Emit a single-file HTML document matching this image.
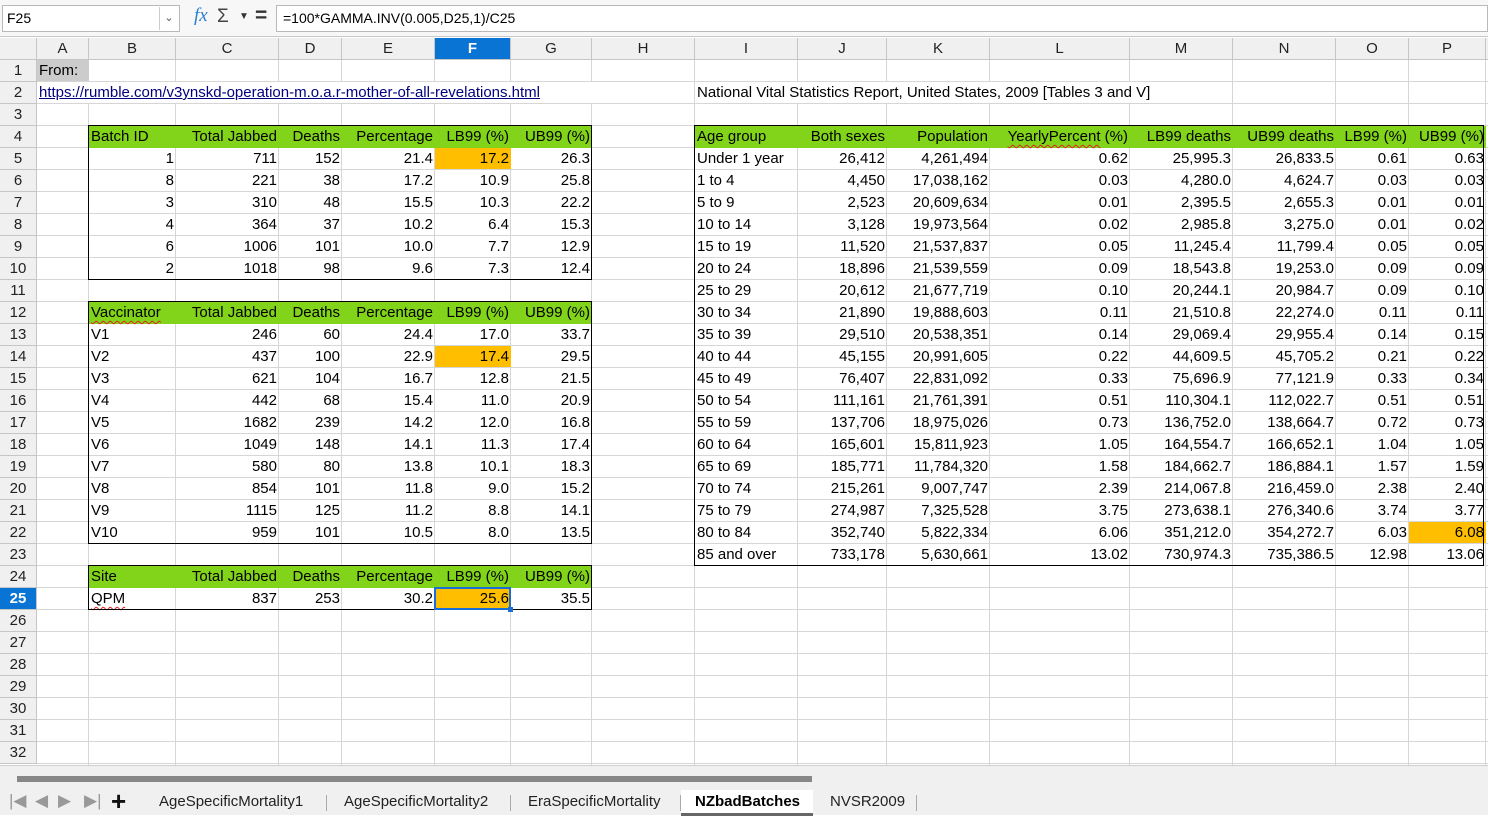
<!DOCTYPE html>
<html><head><meta charset="utf-8"><style>
*{margin:0;padding:0;box-sizing:border-box}
body{width:1488px;height:815px;overflow:hidden;background:#fff;font-family:"Liberation Sans",sans-serif;position:relative}
#top{position:absolute;left:0;top:0;width:1488px;height:37px;background:#f7f7f7;border-bottom:1px solid #c8c8c8}
#nb{position:absolute;left:2px;top:5px;width:178px;height:27px;background:#fff;border:1px solid #b9b9b9;font-size:14px;line-height:25px;padding-left:4px}
#nbd{position:absolute;left:159px;top:7px;width:19px;height:23px;border-left:1px solid #ccc;font-size:11px;color:#555;text-align:center;line-height:23px}
#fx{position:absolute;left:194px;top:5px;font:italic 19px "Liberation Serif",serif;color:#2a7fd0}
#sig{position:absolute;left:217px;top:6px;font-size:19px;color:#444}
#dd{position:absolute;left:239px;top:11px;font-size:10px;color:#333}
#eq{position:absolute;left:255px;top:4px;font-size:21px;color:#333;font-weight:bold}
#fb{position:absolute;left:276px;top:5px;width:1212px;height:27px;background:#fff;border:1px solid #b9b9b9;font-size:14px;line-height:25px;padding-left:6px}
#g{position:absolute;left:0;top:38px;width:1488px;height:727px;display:grid;
grid-template-columns:37px 52px 87px 103px 63px 93px 76px 81px 103px 103px 89px 103px 140px 103px 103px 73px 77px 2px;
grid-template-rows:repeat(33,22px);font-size:15px;
background:repeating-linear-gradient(to bottom,transparent 0,transparent 21px,#d6d6d6 21px,#d6d6d6 22px)}
.v{position:absolute;top:38px;width:1px;height:727px;background:#d6d6d6}
.c{white-space:nowrap;line-height:21px;padding:0 2px;overflow:visible;z-index:2}
.r{text-align:right}
.h{background:#f0f0f0;border-right:1px solid #c6c6c6;border-bottom:1px solid #c6c6c6;text-align:center;line-height:21px;font-size:15px;color:#222;z-index:1}
.rh{background:#f0f0f0;border-right:1px solid #c6c6c6;border-bottom:1px solid #c6c6c6;text-align:center;line-height:21px;font-size:15px;color:#222;z-index:1}
.sel{background:#0a74d4;color:#fff;font-weight:bold}
.gr{background:#81d41a;z-index:1}
.or{background:#ffbf00;z-index:1}
.bx{border:1px solid #000;z-index:3}
.sq{text-decoration:underline wavy #e02020;text-decoration-thickness:1px;text-underline-offset:3px}
#bot{position:absolute;left:0;top:765px;width:1488px;height:50px;background:#f0f0f0;border-top:1px solid #d0d0d0}
#sb{position:absolute;left:17px;top:10px;width:795px;height:6px;background:#878787}
.tab{position:absolute;top:27px;font-size:15px;color:#222}
.sep{position:absolute;top:29px;width:1px;height:16px;background:#aaa}
.nav{position:absolute;top:25px;font-size:17px;color:#999}
</style></head><body>
<div id="top">
<div id="nb">F25</div><div id="nbd">&#8964;</div>
<div id="fx">fx</div><div id="sig">&Sigma;</div><div id="dd">&#9660;</div><div id="eq">=</div>
<div id="fb">=100*GAMMA.INV(0.005,D25,1)/C25</div>
</div>
<div class="v" style="left:88px"></div><div class="v" style="left:175px"></div><div class="v" style="left:278px"></div><div class="v" style="left:341px"></div><div class="v" style="left:434px"></div><div class="v" style="left:510px"></div><div class="v" style="left:591px"></div><div class="v" style="left:694px"></div><div class="v" style="left:797px"></div><div class="v" style="left:886px"></div><div class="v" style="left:989px"></div><div class="v" style="left:1129px"></div><div class="v" style="left:1232px"></div><div class="v" style="left:1335px"></div><div class="v" style="left:1408px"></div><div class="v" style="left:1485px"></div>
<div id="g">
<div class="h" style="grid-area:1/1"></div>
<div class="h" style="grid-area:1/2">A</div><div class="h" style="grid-area:1/3">B</div><div class="h" style="grid-area:1/4">C</div><div class="h" style="grid-area:1/5">D</div><div class="h" style="grid-area:1/6">E</div><div class="h sel" style="grid-area:1/7">F</div><div class="h" style="grid-area:1/8">G</div><div class="h" style="grid-area:1/9">H</div><div class="h" style="grid-area:1/10">I</div><div class="h" style="grid-area:1/11">J</div><div class="h" style="grid-area:1/12">K</div><div class="h" style="grid-area:1/13">L</div><div class="h" style="grid-area:1/14">M</div><div class="h" style="grid-area:1/15">N</div><div class="h" style="grid-area:1/16">O</div><div class="h" style="grid-area:1/17">P</div><div class="h" style="grid-area:1/18;border-right:0"></div>
<div class="rh" style="grid-area:2/1">1</div><div class="rh" style="grid-area:3/1">2</div><div class="rh" style="grid-area:4/1">3</div><div class="rh" style="grid-area:5/1">4</div><div class="rh" style="grid-area:6/1">5</div><div class="rh" style="grid-area:7/1">6</div><div class="rh" style="grid-area:8/1">7</div><div class="rh" style="grid-area:9/1">8</div><div class="rh" style="grid-area:10/1">9</div><div class="rh" style="grid-area:11/1">10</div><div class="rh" style="grid-area:12/1">11</div><div class="rh" style="grid-area:13/1">12</div><div class="rh" style="grid-area:14/1">13</div><div class="rh" style="grid-area:15/1">14</div><div class="rh" style="grid-area:16/1">15</div><div class="rh" style="grid-area:17/1">16</div><div class="rh" style="grid-area:18/1">17</div><div class="rh" style="grid-area:19/1">18</div><div class="rh" style="grid-area:20/1">19</div><div class="rh" style="grid-area:21/1">20</div><div class="rh" style="grid-area:22/1">21</div><div class="rh" style="grid-area:23/1">22</div><div class="rh" style="grid-area:24/1">23</div><div class="rh" style="grid-area:25/1">24</div><div class="rh sel" style="grid-area:26/1">25</div><div class="rh" style="grid-area:27/1">26</div><div class="rh" style="grid-area:28/1">27</div><div class="rh" style="grid-area:29/1">28</div><div class="rh" style="grid-area:30/1">29</div><div class="rh" style="grid-area:31/1">30</div><div class="rh" style="grid-area:32/1">31</div><div class="rh" style="grid-area:33/1">32</div>

<div style="grid-area:2/2;background:#cccccc;margin-bottom:1px"></div>
<div class="c" style="grid-area:2/2">From:</div>
<div class="c" style="grid-area:3/2/3/10;color:#000080;text-decoration:underline;background:#fff;margin-bottom:1px;width:570px">https://rumble.com/v3ynskd-operation-m.o.a.r-mother-of-all-revelations.html</div>
<div class="c" style="grid-area:3/10/3/14;background:#fff;margin-bottom:1px;width:495px">National Vital Statistics Report, United States, 2009 [Tables 3 and V]</div>

<!-- fills -->
<div class="gr" style="grid-area:5/3/6/9"></div>
<div class="gr" style="grid-area:13/3/14/9"></div>
<div class="gr" style="grid-area:25/3/26/9"></div>
<div class="gr" style="grid-area:5/10/6/18"></div>
<div class="or" style="grid-area:6/7;margin-bottom:1px"></div>
<div class="or" style="grid-area:15/7;margin-bottom:1px"></div>
<div class="or" style="grid-area:26/7;margin-bottom:1px"></div>
<div class="or" style="grid-area:23/17;margin-bottom:1px"></div>

<!-- table 1 -->
<div class="c" style="grid-area:5/3">Batch ID</div><div class="c r" style="grid-area:5/4">Total Jabbed</div><div class="c r" style="grid-area:5/5">Deaths</div><div class="c r" style="grid-area:5/6">Percentage</div><div class="c r" style="grid-area:5/7">LB99 (%)</div><div class="c r" style="grid-area:5/8">UB99 (%)</div>
<div class="c r" style="grid-area:6/3">1</div><div class="c r" style="grid-area:6/4">711</div><div class="c r" style="grid-area:6/5">152</div><div class="c r" style="grid-area:6/6">21.4</div><div class="c r" style="grid-area:6/7">17.2</div><div class="c r" style="grid-area:6/8">26.3</div>
<div class="c r" style="grid-area:7/3">8</div><div class="c r" style="grid-area:7/4">221</div><div class="c r" style="grid-area:7/5">38</div><div class="c r" style="grid-area:7/6">17.2</div><div class="c r" style="grid-area:7/7">10.9</div><div class="c r" style="grid-area:7/8">25.8</div>
<div class="c r" style="grid-area:8/3">3</div><div class="c r" style="grid-area:8/4">310</div><div class="c r" style="grid-area:8/5">48</div><div class="c r" style="grid-area:8/6">15.5</div><div class="c r" style="grid-area:8/7">10.3</div><div class="c r" style="grid-area:8/8">22.2</div>
<div class="c r" style="grid-area:9/3">4</div><div class="c r" style="grid-area:9/4">364</div><div class="c r" style="grid-area:9/5">37</div><div class="c r" style="grid-area:9/6">10.2</div><div class="c r" style="grid-area:9/7">6.4</div><div class="c r" style="grid-area:9/8">15.3</div>
<div class="c r" style="grid-area:10/3">6</div><div class="c r" style="grid-area:10/4">1006</div><div class="c r" style="grid-area:10/5">101</div><div class="c r" style="grid-area:10/6">10.0</div><div class="c r" style="grid-area:10/7">7.7</div><div class="c r" style="grid-area:10/8">12.9</div>
<div class="c r" style="grid-area:11/3">2</div><div class="c r" style="grid-area:11/4">1018</div><div class="c r" style="grid-area:11/5">98</div><div class="c r" style="grid-area:11/6">9.6</div><div class="c r" style="grid-area:11/7">7.3</div><div class="c r" style="grid-area:11/8">12.4</div>
<div class="bx" style="grid-area:5/3/12/9;margin:-1px 0 0 -1px"></div>

<!-- table 2 -->
<div class="c" style="grid-area:13/3"><span class="sq">Vaccinator</span></div><div class="c r" style="grid-area:13/4">Total Jabbed</div><div class="c r" style="grid-area:13/5">Deaths</div><div class="c r" style="grid-area:13/6">Percentage</div><div class="c r" style="grid-area:13/7">LB99 (%)</div><div class="c r" style="grid-area:13/8">UB99 (%)</div>
<div class="c" style="grid-area:14/3">V1</div><div class="c r" style="grid-area:14/4">246</div><div class="c r" style="grid-area:14/5">60</div><div class="c r" style="grid-area:14/6">24.4</div><div class="c r" style="grid-area:14/7">17.0</div><div class="c r" style="grid-area:14/8">33.7</div>
<div class="c" style="grid-area:15/3">V2</div><div class="c r" style="grid-area:15/4">437</div><div class="c r" style="grid-area:15/5">100</div><div class="c r" style="grid-area:15/6">22.9</div><div class="c r" style="grid-area:15/7">17.4</div><div class="c r" style="grid-area:15/8">29.5</div>
<div class="c" style="grid-area:16/3">V3</div><div class="c r" style="grid-area:16/4">621</div><div class="c r" style="grid-area:16/5">104</div><div class="c r" style="grid-area:16/6">16.7</div><div class="c r" style="grid-area:16/7">12.8</div><div class="c r" style="grid-area:16/8">21.5</div>
<div class="c" style="grid-area:17/3">V4</div><div class="c r" style="grid-area:17/4">442</div><div class="c r" style="grid-area:17/5">68</div><div class="c r" style="grid-area:17/6">15.4</div><div class="c r" style="grid-area:17/7">11.0</div><div class="c r" style="grid-area:17/8">20.9</div>
<div class="c" style="grid-area:18/3">V5</div><div class="c r" style="grid-area:18/4">1682</div><div class="c r" style="grid-area:18/5">239</div><div class="c r" style="grid-area:18/6">14.2</div><div class="c r" style="grid-area:18/7">12.0</div><div class="c r" style="grid-area:18/8">16.8</div>
<div class="c" style="grid-area:19/3">V6</div><div class="c r" style="grid-area:19/4">1049</div><div class="c r" style="grid-area:19/5">148</div><div class="c r" style="grid-area:19/6">14.1</div><div class="c r" style="grid-area:19/7">11.3</div><div class="c r" style="grid-area:19/8">17.4</div>
<div class="c" style="grid-area:20/3">V7</div><div class="c r" style="grid-area:20/4">580</div><div class="c r" style="grid-area:20/5">80</div><div class="c r" style="grid-area:20/6">13.8</div><div class="c r" style="grid-area:20/7">10.1</div><div class="c r" style="grid-area:20/8">18.3</div>
<div class="c" style="grid-area:21/3">V8</div><div class="c r" style="grid-area:21/4">854</div><div class="c r" style="grid-area:21/5">101</div><div class="c r" style="grid-area:21/6">11.8</div><div class="c r" style="grid-area:21/7">9.0</div><div class="c r" style="grid-area:21/8">15.2</div>
<div class="c" style="grid-area:22/3">V9</div><div class="c r" style="grid-area:22/4">1115</div><div class="c r" style="grid-area:22/5">125</div><div class="c r" style="grid-area:22/6">11.2</div><div class="c r" style="grid-area:22/7">8.8</div><div class="c r" style="grid-area:22/8">14.1</div>
<div class="c" style="grid-area:23/3">V10</div><div class="c r" style="grid-area:23/4">959</div><div class="c r" style="grid-area:23/5">101</div><div class="c r" style="grid-area:23/6">10.5</div><div class="c r" style="grid-area:23/7">8.0</div><div class="c r" style="grid-area:23/8">13.5</div>
<div class="bx" style="grid-area:13/3/24/9;margin:-1px 0 0 -1px"></div>

<!-- table 3 -->
<div class="c" style="grid-area:25/3">Site</div><div class="c r" style="grid-area:25/4">Total Jabbed</div><div class="c r" style="grid-area:25/5">Deaths</div><div class="c r" style="grid-area:25/6">Percentage</div><div class="c r" style="grid-area:25/7">LB99 (%)</div><div class="c r" style="grid-area:25/8">UB99 (%)</div>
<div class="c" style="grid-area:26/3"><span class="sq">QPM</span></div><div class="c r" style="grid-area:26/4">837</div><div class="c r" style="grid-area:26/5">253</div><div class="c r" style="grid-area:26/6">30.2</div><div class="c r" style="grid-area:26/7">25.6</div><div class="c r" style="grid-area:26/8">35.5</div>
<div class="bx" style="grid-area:25/3/27/9;margin:-1px 0 0 -1px"></div>
<div style="grid-area:26/7;border:2px solid #1a6fd6;margin:-1px 0 0 -1px;z-index:4;position:relative"><div style="position:absolute;right:-4px;bottom:-4px;width:5px;height:5px;background:#1a6fd6"></div></div>

<!-- table 4 -->
<div class="c" style="grid-area:5/10">Age group</div><div class="c r" style="grid-area:5/11">Both sexes</div><div class="c r" style="grid-area:5/12">Population</div><div class="c r" style="grid-area:5/13"><span class="sq">YearlyPercent</span> (%)</div><div class="c r" style="grid-area:5/14">LB99 deaths</div><div class="c r" style="grid-area:5/15">UB99 deaths</div><div class="c r" style="grid-area:5/16">LB99 (%)</div><div class="c r" style="grid-area:5/17">UB99 (%)</div>
<div class="c" style="grid-area:6/10">Under 1 year</div><div class="c r" style="grid-area:6/11">26,412</div><div class="c r" style="grid-area:6/12">4,261,494</div><div class="c r" style="grid-area:6/13">0.62</div><div class="c r" style="grid-area:6/14">25,995.3</div><div class="c r" style="grid-area:6/15">26,833.5</div><div class="c r" style="grid-area:6/16">0.61</div><div class="c r" style="grid-area:6/17">0.63</div>
<div class="c" style="grid-area:7/10">1 to 4</div><div class="c r" style="grid-area:7/11">4,450</div><div class="c r" style="grid-area:7/12">17,038,162</div><div class="c r" style="grid-area:7/13">0.03</div><div class="c r" style="grid-area:7/14">4,280.0</div><div class="c r" style="grid-area:7/15">4,624.7</div><div class="c r" style="grid-area:7/16">0.03</div><div class="c r" style="grid-area:7/17">0.03</div>
<div class="c" style="grid-area:8/10">5 to 9</div><div class="c r" style="grid-area:8/11">2,523</div><div class="c r" style="grid-area:8/12">20,609,634</div><div class="c r" style="grid-area:8/13">0.01</div><div class="c r" style="grid-area:8/14">2,395.5</div><div class="c r" style="grid-area:8/15">2,655.3</div><div class="c r" style="grid-area:8/16">0.01</div><div class="c r" style="grid-area:8/17">0.01</div>
<div class="c" style="grid-area:9/10">10 to 14</div><div class="c r" style="grid-area:9/11">3,128</div><div class="c r" style="grid-area:9/12">19,973,564</div><div class="c r" style="grid-area:9/13">0.02</div><div class="c r" style="grid-area:9/14">2,985.8</div><div class="c r" style="grid-area:9/15">3,275.0</div><div class="c r" style="grid-area:9/16">0.01</div><div class="c r" style="grid-area:9/17">0.02</div>
<div class="c" style="grid-area:10/10">15 to 19</div><div class="c r" style="grid-area:10/11">11,520</div><div class="c r" style="grid-area:10/12">21,537,837</div><div class="c r" style="grid-area:10/13">0.05</div><div class="c r" style="grid-area:10/14">11,245.4</div><div class="c r" style="grid-area:10/15">11,799.4</div><div class="c r" style="grid-area:10/16">0.05</div><div class="c r" style="grid-area:10/17">0.05</div>
<div class="c" style="grid-area:11/10">20 to 24</div><div class="c r" style="grid-area:11/11">18,896</div><div class="c r" style="grid-area:11/12">21,539,559</div><div class="c r" style="grid-area:11/13">0.09</div><div class="c r" style="grid-area:11/14">18,543.8</div><div class="c r" style="grid-area:11/15">19,253.0</div><div class="c r" style="grid-area:11/16">0.09</div><div class="c r" style="grid-area:11/17">0.09</div>
<div class="c" style="grid-area:12/10">25 to 29</div><div class="c r" style="grid-area:12/11">20,612</div><div class="c r" style="grid-area:12/12">21,677,719</div><div class="c r" style="grid-area:12/13">0.10</div><div class="c r" style="grid-area:12/14">20,244.1</div><div class="c r" style="grid-area:12/15">20,984.7</div><div class="c r" style="grid-area:12/16">0.09</div><div class="c r" style="grid-area:12/17">0.10</div>
<div class="c" style="grid-area:13/10">30 to 34</div><div class="c r" style="grid-area:13/11">21,890</div><div class="c r" style="grid-area:13/12">19,888,603</div><div class="c r" style="grid-area:13/13">0.11</div><div class="c r" style="grid-area:13/14">21,510.8</div><div class="c r" style="grid-area:13/15">22,274.0</div><div class="c r" style="grid-area:13/16">0.11</div><div class="c r" style="grid-area:13/17">0.11</div>
<div class="c" style="grid-area:14/10">35 to 39</div><div class="c r" style="grid-area:14/11">29,510</div><div class="c r" style="grid-area:14/12">20,538,351</div><div class="c r" style="grid-area:14/13">0.14</div><div class="c r" style="grid-area:14/14">29,069.4</div><div class="c r" style="grid-area:14/15">29,955.4</div><div class="c r" style="grid-area:14/16">0.14</div><div class="c r" style="grid-area:14/17">0.15</div>
<div class="c" style="grid-area:15/10">40 to 44</div><div class="c r" style="grid-area:15/11">45,155</div><div class="c r" style="grid-area:15/12">20,991,605</div><div class="c r" style="grid-area:15/13">0.22</div><div class="c r" style="grid-area:15/14">44,609.5</div><div class="c r" style="grid-area:15/15">45,705.2</div><div class="c r" style="grid-area:15/16">0.21</div><div class="c r" style="grid-area:15/17">0.22</div>
<div class="c" style="grid-area:16/10">45 to 49</div><div class="c r" style="grid-area:16/11">76,407</div><div class="c r" style="grid-area:16/12">22,831,092</div><div class="c r" style="grid-area:16/13">0.33</div><div class="c r" style="grid-area:16/14">75,696.9</div><div class="c r" style="grid-area:16/15">77,121.9</div><div class="c r" style="grid-area:16/16">0.33</div><div class="c r" style="grid-area:16/17">0.34</div>
<div class="c" style="grid-area:17/10">50 to 54</div><div class="c r" style="grid-area:17/11">111,161</div><div class="c r" style="grid-area:17/12">21,761,391</div><div class="c r" style="grid-area:17/13">0.51</div><div class="c r" style="grid-area:17/14">110,304.1</div><div class="c r" style="grid-area:17/15">112,022.7</div><div class="c r" style="grid-area:17/16">0.51</div><div class="c r" style="grid-area:17/17">0.51</div>
<div class="c" style="grid-area:18/10">55 to 59</div><div class="c r" style="grid-area:18/11">137,706</div><div class="c r" style="grid-area:18/12">18,975,026</div><div class="c r" style="grid-area:18/13">0.73</div><div class="c r" style="grid-area:18/14">136,752.0</div><div class="c r" style="grid-area:18/15">138,664.7</div><div class="c r" style="grid-area:18/16">0.72</div><div class="c r" style="grid-area:18/17">0.73</div>
<div class="c" style="grid-area:19/10">60 to 64</div><div class="c r" style="grid-area:19/11">165,601</div><div class="c r" style="grid-area:19/12">15,811,923</div><div class="c r" style="grid-area:19/13">1.05</div><div class="c r" style="grid-area:19/14">164,554.7</div><div class="c r" style="grid-area:19/15">166,652.1</div><div class="c r" style="grid-area:19/16">1.04</div><div class="c r" style="grid-area:19/17">1.05</div>
<div class="c" style="grid-area:20/10">65 to 69</div><div class="c r" style="grid-area:20/11">185,771</div><div class="c r" style="grid-area:20/12">11,784,320</div><div class="c r" style="grid-area:20/13">1.58</div><div class="c r" style="grid-area:20/14">184,662.7</div><div class="c r" style="grid-area:20/15">186,884.1</div><div class="c r" style="grid-area:20/16">1.57</div><div class="c r" style="grid-area:20/17">1.59</div>
<div class="c" style="grid-area:21/10">70 to 74</div><div class="c r" style="grid-area:21/11">215,261</div><div class="c r" style="grid-area:21/12">9,007,747</div><div class="c r" style="grid-area:21/13">2.39</div><div class="c r" style="grid-area:21/14">214,067.8</div><div class="c r" style="grid-area:21/15">216,459.0</div><div class="c r" style="grid-area:21/16">2.38</div><div class="c r" style="grid-area:21/17">2.40</div>
<div class="c" style="grid-area:22/10">75 to 79</div><div class="c r" style="grid-area:22/11">274,987</div><div class="c r" style="grid-area:22/12">7,325,528</div><div class="c r" style="grid-area:22/13">3.75</div><div class="c r" style="grid-area:22/14">273,638.1</div><div class="c r" style="grid-area:22/15">276,340.6</div><div class="c r" style="grid-area:22/16">3.74</div><div class="c r" style="grid-area:22/17">3.77</div>
<div class="c" style="grid-area:23/10">80 to 84</div><div class="c r" style="grid-area:23/11">352,740</div><div class="c r" style="grid-area:23/12">5,822,334</div><div class="c r" style="grid-area:23/13">6.06</div><div class="c r" style="grid-area:23/14">351,212.0</div><div class="c r" style="grid-area:23/15">354,272.7</div><div class="c r" style="grid-area:23/16">6.03</div><div class="c r" style="grid-area:23/17">6.08</div>
<div class="c" style="grid-area:24/10">85 and over</div><div class="c r" style="grid-area:24/11">733,178</div><div class="c r" style="grid-area:24/12">5,630,661</div><div class="c r" style="grid-area:24/13">13.02</div><div class="c r" style="grid-area:24/14">730,974.3</div><div class="c r" style="grid-area:24/15">735,386.5</div><div class="c r" style="grid-area:24/16">12.98</div><div class="c r" style="grid-area:24/17">13.06</div>
<div class="bx" style="grid-area:5/10/25/18;margin:-1px 2px 0 -1px"></div>
</div>
<div id="bot">
<div id="sb"></div>
<div class="nav" style="left:9px">|&#9664;</div><div class="nav" style="left:35px">&#9664;</div><div class="nav" style="left:58px">&#9654;</div><div class="nav" style="left:84px">&#9654;|</div>
<div style="position:absolute;left:111px;top:20px;font-size:26px;font-weight:bold;color:#111">+</div>
<div class="tab" style="left:159px">AgeSpecificMortality1</div><div class="sep" style="left:326px"></div>
<div class="tab" style="left:344px">AgeSpecificMortality2</div><div class="sep" style="left:510px"></div>
<div class="tab" style="left:528px">EraSpecificMortality</div><div class="sep" style="left:680px"></div>
<div style="position:absolute;left:681px;top:24px;width:132px;height:26px;background:#fff;border-bottom:3px solid #666"></div>
<div class="tab" style="left:695px;font-weight:bold;color:#000">NZbadBatches</div>
<div class="tab" style="left:830px">NVSR2009</div><div class="sep" style="left:916px"></div>
</div>
</body></html>
